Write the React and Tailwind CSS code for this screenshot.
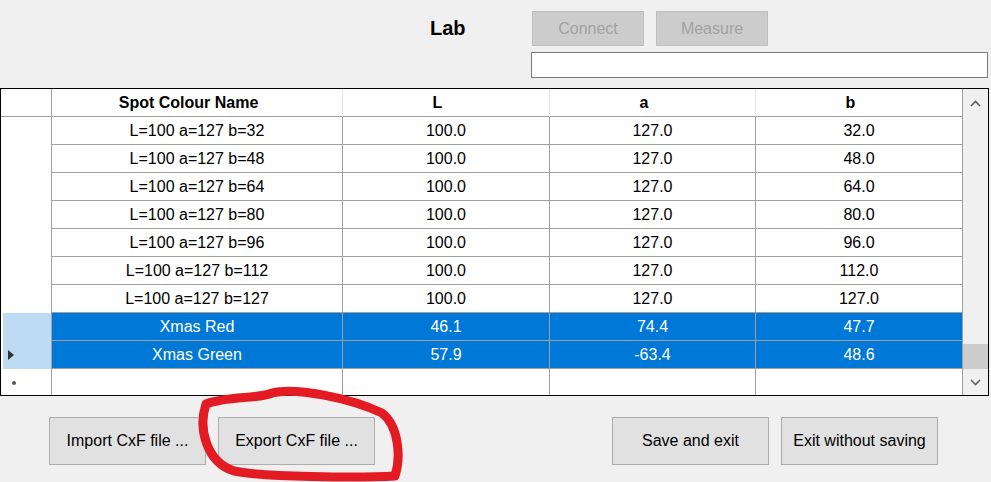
import React from 'react'

const ROWS = [
  { name: 'L=100 a=127 b=32', L: '100.0', a: '127.0', b: '32.0' },
  { name: 'L=100 a=127 b=48', L: '100.0', a: '127.0', b: '48.0' },
  { name: 'L=100 a=127 b=64', L: '100.0', a: '127.0', b: '64.0' },
  { name: 'L=100 a=127 b=80', L: '100.0', a: '127.0', b: '80.0' },
  { name: 'L=100 a=127 b=96', L: '100.0', a: '127.0', b: '96.0' },
  { name: 'L=100 a=127 b=112', L: '100.0', a: '127.0', b: '112.0' },
  { name: 'L=100 a=127 b=127', L: '100.0', a: '127.0', b: '127.0' },
  { name: 'Xmas Red', L: '46.1', a: '74.4', b: '47.7', selected: true },
  { name: 'Xmas Green', L: '57.9', a: '-63.4', b: '48.6', selected: true, current: true },
]

const GRID = 'grid grid-cols-[51px_291px_207px_206px_207px]'

function Cell({ children, selected }) {
  return (
    <div
      className={`h-[28px] flex items-center justify-center border-r border-b border-[#a0a0a0] ${
        selected ? 'bg-[#0078d7] text-white' : 'bg-white text-black'
      }`}
    >
      {children}
    </div>
  )
}

function WinButton({ children, className = '' }) {
  return (
    <button
      className={`w-[157px] h-[48px] bg-[#e1e1e1] border border-[#adadad] text-[16px] text-black ${className}`}
    >
      {children}
    </button>
  )
}

export default function App() {
  return (
    <div
      className="relative w-[991px] h-[482px] bg-[#f0f0f0] overflow-hidden"
      style={{ fontFamily: '"Liberation Sans", Arial, sans-serif' }}
    >
      {/* Top bar */}
      <div className="h-[88px] flex pl-[430px]">
        <div className="w-[101px] pt-[15px] text-[20px] font-bold leading-[26px] text-black">Lab</div>
        <div className="pt-[11px]">
          <div className="flex gap-[12px] pl-px">
            <button className="w-[112px] h-[35px] bg-[#cccccc] border border-[#bfbfbf] text-[16px] text-[#a2a2a2]">
              Connect
            </button>
            <button className="w-[112px] h-[35px] bg-[#cccccc] border border-[#bfbfbf] text-[16px] text-[#a2a2a2]">
              Measure
            </button>
          </div>
          <div className="mt-[6px] w-[457px] h-[26px] bg-white border border-[#7a7a7a]" />
        </div>
      </div>

      {/* Grid */}
      <div className="w-[989px] h-[308px] border border-black bg-white flex text-[16px]">
        <div className="w-[962px]">
          {/* Header */}
          <div className={GRID}>
            <div className="h-[28px] bg-white border-r border-b border-r-[#a0a0a0] border-b-[#a0a0a0]" />
            {['Spot Colour Name', 'L', 'a', 'b'].map((h, i) => (
              <div
                key={h}
                className={`h-[28px] flex items-center justify-center pr-[17px] font-bold bg-white border-b border-b-[#a0a0a0] ${
                  i < 3 ? 'border-r border-r-[#e3e3e3]' : 'border-r border-r-[#a0a0a0]'
                }`}
              >
                {h}
              </div>
            ))}
          </div>

          {/* Rows */}
          {ROWS.map((r) => (
            <div key={r.name} className={GRID}>
              <div className="h-[28px] border-r border-[#a0a0a0] bg-white pl-[2px]">
                <div className={`h-full flex items-center pl-[5px] ${r.selected ? 'bg-[#bddcf3]' : ''}`}>
                  {r.current && (
                    <svg width="6" height="10" viewBox="0 0 6 10">
                      <path d="M0 0 L6 5 L0 10 Z" fill="#333" />
                    </svg>
                  )}
                </div>
              </div>
              <Cell selected={r.selected}>{r.name}</Cell>
              <Cell selected={r.selected}>{r.L}</Cell>
              <Cell selected={r.selected}>{r.a}</Cell>
              <Cell selected={r.selected}>{r.b}</Cell>
            </div>
          ))}

          {/* New row */}
          <div className={GRID}>
            <div className="h-[26px] border-r border-[#a0a0a0] flex items-center pl-[11px]">
              <span className="w-[4px] h-[4px] mt-[2px] rounded-full bg-[#555]" />
            </div>
            <div className="h-[26px] border-r border-[#a0a0a0]" />
            <div className="h-[26px] border-r border-[#a0a0a0]" />
            <div className="h-[26px] border-r border-[#a0a0a0]" />
            <div className="h-[26px] border-r border-[#a0a0a0]" />
          </div>
        </div>

        {/* Scrollbar */}
        <div className="w-[25px] bg-[#f0f0f0] flex flex-col">
          <div className="h-[28px] flex items-center justify-center">
            <svg width="11" height="7" viewBox="0 0 11 7">
              <path d="M1 6 L5.5 1.5 L10 6" fill="none" stroke="#606060" strokeWidth="1.6" />
            </svg>
          </div>
          <div className="flex-1" />
          <div className="h-[25px] bg-[#cdcdcd]" />
          <div className="h-[26px] flex items-center justify-center">
            <svg width="11" height="7" viewBox="0 0 11 7">
              <path d="M1 1 L5.5 5.5 L10 1" fill="none" stroke="#606060" strokeWidth="1.6" />
            </svg>
          </div>
        </div>
      </div>

      {/* Bottom buttons */}
      <div className="flex mt-[21px] pl-[49px]">
        <WinButton>Import CxF file ...</WinButton>
        <WinButton className="ml-[12px]">Export CxF file ...</WinButton>
        <WinButton className="ml-[237px]">Save and exit</WinButton>
        <WinButton className="ml-[12px]">Exit without saving</WinButton>
      </div>

      {/* Red hand-drawn annotation */}
      <svg className="absolute left-0 top-0 pointer-events-none" width="991" height="482">
        <path
          d="M206 404 C 228 396, 258 399, 272 393 C 296 387, 350 398, 382 413 C 399 426, 401 458, 395 476 C 360 478, 262 477, 234 471 C 206 462, 198 428, 206 404 Z"
          fill="none"
          stroke="#e31c23"
          strokeWidth="9"
          strokeLinejoin="round"
        />
      </svg>
    </div>
  )
}
